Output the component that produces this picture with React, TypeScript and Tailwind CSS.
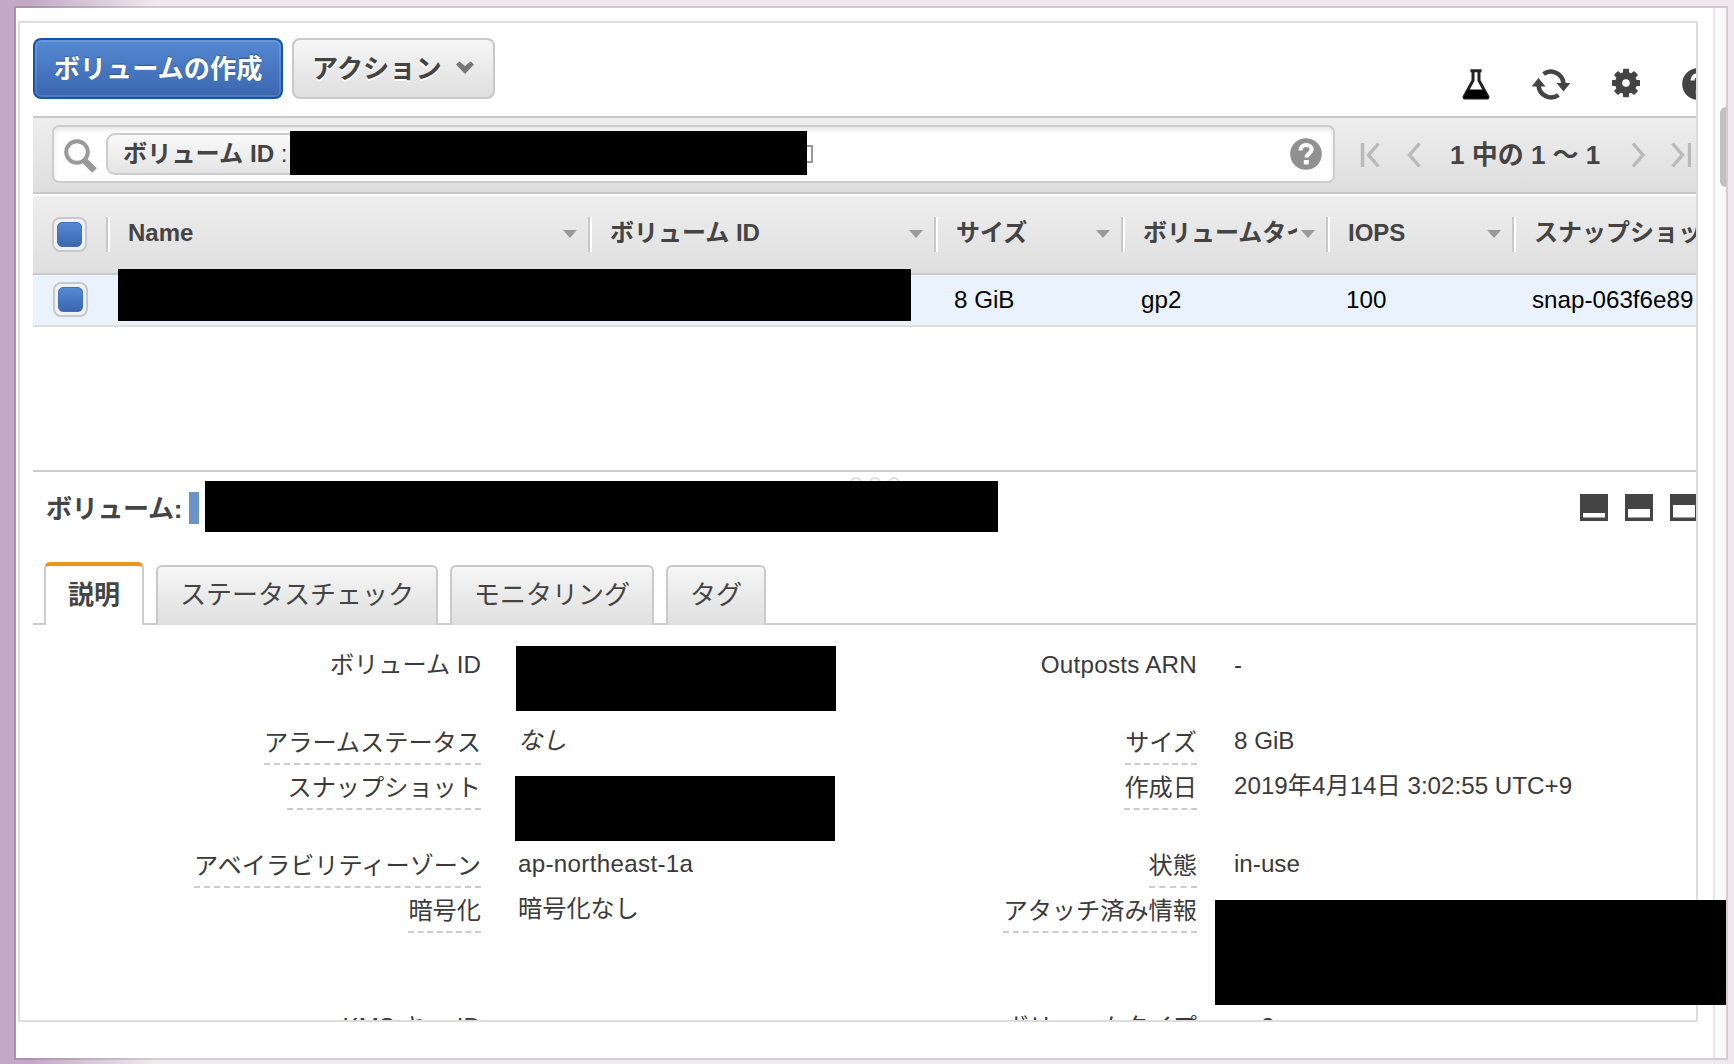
import { useState } from 'react'
import { clsx } from 'clsx'

type Column = { label: string; value: string; width: string }

const COLUMNS: Column[] = [
  { label: 'Name',             value: '',              width: 'w-[482px]' },
  { label: 'ボリューム ID',     value: '',              width: 'w-[346px]' },
  { label: 'サイズ',           value: '8 GiB',         width: 'w-[187px]' },
  { label: 'ボリュームタイプ',  value: 'gp2',           width: 'w-[205px]' },
  { label: 'IOPS',             value: '100',           width: 'w-[186px]' },
  { label: 'スナップショット',  value: 'snap-063f6e89', width: 'w-[230px]' },
]

const TABS = ['説明', 'ステータスチェック', 'モニタリング', 'タグ']

const DETAILS = [
  { height: 'h-[77px]',  left: 'ボリューム ID',          leftValue: '',                right: 'Outposts ARN',     rightValue: '-', plain: true },
  { height: 'h-[45px]',  left: 'アラームステータス',      leftValue: 'なし',            right: 'サイズ',           rightValue: '8 GiB', italic: true },
  { height: 'h-[78px]',  left: 'スナップショット',        leftValue: '',                right: '作成日',           rightValue: '2019年4月14日 3:02:55 UTC+9' },
  { height: 'h-[45px]',  left: 'アベイラビリティーゾーン', leftValue: 'ap-northeast-1a', right: '状態',             rightValue: 'in-use' },
  { height: 'h-[117px]', left: '暗号化',                 leftValue: '暗号化なし',       right: 'アタッチ済み情報',  rightValue: '' },
  { height: 'h-[46px]',  left: 'KMS キー ID',            leftValue: '',                right: 'ボリュームタイプ',  rightValue: 'gp2', plain: true },
]

function FlaskIcon() {
  return (
    <svg width="28" height="31" viewBox="0 0 28 31" className="shrink-0">
      <path d="M8.500 1.700h11M11 2v9.500L2.200 27.500a1 1 0 0 0 .9 1.600h21.800a1 1 0 0 0 .9-1.600L17 11.500V2" fill="none" stroke="#222" strokeWidth="3" />
      <path d="M6 20.500h16l5 9H1z" fill="#000" />
    </svg>
  )
}

function RefreshIcon() {
  return (
    <svg width="38" height="32" viewBox="0 0 38 32" className="shrink-0">
      <path d="M11.500 6A12.600 12.600 0 0 1 31.400 16M26.500 27A12.600 12.600 0 0 1 6.600 17" fill="none" stroke="#444" strokeWidth="4.600" />
      <path d="M24.500 15h14l-7 8.500zM-.5 18.500h14l-7-8.500z" fill="#444" />
    </svg>
  )
}

function GearIcon() {
  return (
    <svg width="28" height="30" viewBox="-14 -15 28 30" className="shrink-0">
      <g fill="#444">
        {[0, 45, 90, 135].map(a => (
          <rect key={a} x="-3" y="-14.200" width="6" height="28.400" rx="1" transform={`rotate(${a})`} />
        ))}
        <circle r="11" />
      </g>
      <circle r="3.800" fill="#fff" />
    </svg>
  )
}

function HelpIcon({ color }: { color: string }) {
  return (
    <svg width="32" height="32" viewBox="0 0 32 32" className="shrink-0">
      <circle cx="16" cy="16" r="15.800" fill={color} />
      <path d="M10.500 12.500c0-3.500 2.500-5.500 5.600-5.500 3.300 0 5.500 1.900 5.500 4.600 0 4-5.100 4.200-5.100 8" fill="none" stroke="#fff" strokeWidth="4.200" />
      <rect x="13.800" y="22" width="5" height="4.400" fill="#fff" />
    </svg>
  )
}

function PagerIcon({ d, className }: { d: string; className?: string }) {
  return (
    <svg width="20" height="26" viewBox="0 0 20 26" className={clsx('shrink-0', className)}>
      <path d={d} fill="none" stroke="#b9b9b9" strokeWidth="3.400" />
    </svg>
  )
}

// Split-view toggles: the higher the window, the larger the lower pane
function PaneIcon({ top }: { top: number }) {
  return (
    <svg width="28" height="27" viewBox="0 0 28 27" className="shrink-0">
      <rect width="28" height="27" fill="#444" />
      <rect x="3" y={top} width="22" height={23.5 - top} fill="#fff" />
    </svg>
  )
}

function Checkbox({ className }: { className: string }) {
  return (
    <div className={clsx('h-[35px] w-[35px] shrink-0 rounded-[8px] border-2 border-[#c8c8c8] bg-[#f1f1f1] p-[3px]', className)}>
      <div className="h-full w-full rounded-[5px] border border-[#3f70ba] bg-linear-to-b from-[#5689d3] to-[#3a66af]" />
    </div>
  )
}

function Label({ text, plain, className }: { text: string; plain?: boolean; className: string }) {
  return (
    <div className={clsx('shrink-0 text-right', className)}>
      <span className={clsx('inline-block h-[41px]', !plain && 'border-b-2 border-dashed border-[#ccc] pt-px')}>{text}</span>
    </div>
  )
}

export default function App() {
  const [activeTab, setActiveTab] = useState(TABS[0])

  return (
    <div className="flex h-[1064px] w-[1734px] overflow-hidden bg-linear-to-r from-[#c3a8c7] from-[30px] via-[#efe9ed] via-[155px] to-[#efe8ec] pt-[6px] pr-[6px] pb-[4px] pl-[14px] font-['Liberation_Sans','Noto_Sans_CJK_JP',sans-serif] text-[24px] text-[#444]">
      <div className="relative flex flex-1 border-2 border-black/12 bg-white bg-clip-padding">
        <div className="mt-[13px] ml-[2px] h-[1001px] w-[1680px] shrink-0 overflow-hidden border-2 border-[#ddd] pl-[13px] whitespace-nowrap">

          {/* Actions */}
          <div className="flex h-[93px] items-start pt-[15px] text-[26px] font-bold">
            <button className="h-[61px] w-[250px] shrink-0 rounded-[8px] border-2 border-[#1456af] bg-linear-to-b from-[#5689d3] to-[#3a66af] pt-[2px] text-[26.200px] text-white shadow-[inset_0_0_0_2px_rgba(255,255,255,0.12)] text-shadow-[0_-1px_1px_rgba(0,0,0,0.3)]">
              ボリュームの作成
            </button>
            <button className="ml-[9px] flex h-[61px] w-[203px] shrink-0 items-center rounded-[8px] border-2 border-[#c8c8c8] bg-linear-to-b from-[#f6f6f6] to-[#dfdfdf] pt-[2px] pl-[18px] text-[26.200px] text-shadow-[0_2px_0_#fff]">
              アクション
              <svg width="20" height="14" viewBox="0 0 20 14" className="mt-[-3px] ml-[13px]">
                <path d="M1 3.500 4.500.5 10 5 15.500.5 19 3.500 10 13z" fill="#777" />
              </svg>
            </button>
            <div className="mt-[30px] ml-[967px] flex shrink-0 items-center gap-[42px]">
              <FlaskIcon />
              <RefreshIcon />
              <div className="mt-[-3px]"><GearIcon /></div>
              <HelpIcon color="#444" />
            </div>
          </div>

          {/* Filter and pager */}
          <div className="flex h-[78px] items-start border-t-2 border-b-2 border-[#c8c8c8] bg-linear-to-b from-[#eee] to-[#dedede] pt-[7px] pl-[19px]">
            <div className="relative flex h-[58px] w-[1283px] shrink-0 items-center rounded-[7px] border-2 border-[#ccc] bg-white shadow-[inset_0_3px_5px_rgba(0,0,0,0.1)]">
              <svg width="34" height="34" viewBox="0 0 34 34" className="mt-[3px] ml-[10px]">
                <circle cx="13" cy="13" r="10.800" fill="none" stroke="#999" strokeWidth="4" />
                <path d="m21 22 9.500 9.500" stroke="#999" strokeWidth="6.500" />
              </svg>
              <div className="ml-[8px] h-[42px] w-[500px] rounded-[9px] border-2 border-[#ccc] bg-linear-to-b from-[#fafafa] to-[#e4e4e4] pl-[15px] text-[24.200px] leading-[38px]">
                <b>ボリューム ID</b> :
              </div>
              <div className="absolute top-[18px] left-[744px] h-[18px] w-[15px] border-2 border-[#999]" />
              <div className="absolute top-[4px] left-[236px] h-[44px] w-[517px] bg-black" />
              <div className="mr-[11px] ml-auto">
                <HelpIcon color="#919191" />
              </div>
            </div>
            <div className="mt-[15px] ml-[25px] flex shrink-0 items-center leading-[30px]">
              <PagerIcon d="M2.500 1v24M18.500 1.500 8.500 13l10 11.500" />
              <PagerIcon d="M14.500 1.500 4.500 13l10 11.500" className="ml-[25px]" />
              <span className="ml-[25px] w-[152px] text-[26px] font-bold">1 中の 1 〜 1</span>
              <PagerIcon d="M2 1.500 12 13 2 24.500" className="ml-[29px]" />
              <PagerIcon d="M1.500 1.500 11.500 13l-10 11.500M18.500 1v24" className="ml-[20px]" />
            </div>
          </div>

          {/* Volumes table */}
          <div className="flex h-[81px] border-t-2 border-t-white border-b-2 border-b-[#c8c8c8] bg-linear-to-b from-[#eee] to-[#dfdfdf] pt-[21px] font-bold">
            <Checkbox className="mr-[19px] ml-[19px]" />
            {COLUMNS.map(c => (
              <div key={c.label} className={clsx('flex h-[35px] shrink-0 items-start border-l-2 border-[#c8c8c8] shadow-[inset_2px_0_0_#fff]', c.width)}>
                <span className="mr-[4px] ml-[20px] h-[35px] flex-1 overflow-hidden leading-[31px]">{c.label}</span>
                <svg width="14" height="8" viewBox="0 0 14 8" className="mt-[13px] mr-[11px]">
                  <path d="M0 0h14L7 8z" fill="#999" />
                </svg>
              </div>
            ))}
          </div>
          <div className="relative flex h-[52px] border-b-2 border-[#ddd] bg-[#eaf2fd] pt-[7px] text-black">
            <Checkbox className="mr-[17px] ml-[20px]" />
            {COLUMNS.map(c => (
              <div key={c.label} className={clsx('shrink-0 pl-[21px] text-[24.200px] leading-[35px]', c.width)}>{c.value}</div>
            ))}
            <div className="absolute top-[-6px] left-[85px] h-[52px] w-[793px] bg-black" />
          </div>

          {/* Selected volume */}
          <div className="relative mt-[143px] flex h-[91px] border-t-2 border-[#ccc] pt-[20px] pl-[13px]">
            <div className="absolute top-[5px] left-[817px] flex gap-[7px]">
              {[0, 1, 2].map(i => (
                <span key={i} className="h-3 w-3 rounded-full border-2 border-[#ddd]" />
              ))}
            </div>
            <span className="w-[143px] shrink-0 text-[26px] leading-[35px] font-bold tracking-[-0.300px]">ボリューム:</span>
            <div className="h-[32px] w-[10px] shrink-0 bg-[#6c93c7]" />
            <div className="absolute top-[9px] left-[172px] h-[51px] w-[793px] bg-black" />
            <div className="mt-[2px] ml-[1381px] flex shrink-0 gap-[17px]">
              <PaneIcon top={19} />
              <PaneIcon top={15} />
              <PaneIcon top={11} />
            </div>
          </div>

          {/* Tabs */}
          <div className="flex h-[64px] items-end text-[26px]">
            <div className="h-[2px] w-[11px] bg-[#ccc]" />
            {TABS.map(tab => (
              <div key={tab} className="flex shrink-0 items-end">
                {tab === activeTab ? (
                  <button className="h-[63px] rounded-t-[6px] border-x-2 border-t-[4px] border-x-[#ccc] border-t-[#e9951c] bg-white px-[22px] font-bold">{tab}</button>
                ) : (
                  <button onClick={() => setActiveTab(tab)} className="h-[60px] rounded-t-[6px] border-2 border-b-0 border-[#c8c8c8] bg-linear-to-b from-[#f6f6f6] to-[#dfdfdf] px-[22px] pb-[1px]">{tab}</button>
                )}
                <div className="h-[2px] w-[12px] bg-[#ccc]" />
              </div>
            ))}
            <div className="h-[2px] flex-1 bg-[#ccc]" />
          </div>

          {/* Description */}
          <div className="relative pt-[22px] text-[24.200px] leading-[36px] text-[#3a3a3a]">
            {DETAILS.map(d => (
              <div key={d.left} className={clsx('flex', d.height)}>
                <Label text={d.left} plain={d.plain} className="w-[448px]" />
                <div className={clsx('mt-[-1px] ml-[37px] w-[460px] shrink-0', d.italic && 'italic', d.leftValue.startsWith('ap-') && 'tracking-[0.300px]')}>{d.leftValue}</div>
                <Label text={d.right} plain={d.plain} className={clsx('w-[219px]', d.right === 'Outposts ARN' && 'tracking-[0.250px]')} />
                <div className={clsx('ml-[37px] shrink-0', !d.plain && 'mt-[-1px]')}>{d.rightValue}</div>
              </div>
            ))}
            <div className="absolute top-[21px] left-[483px] h-[65px] w-[320px] bg-black" />
            <div className="absolute top-[151px] left-[482px] h-[65px] w-[320px] bg-black" />
          </div>
        </div>

        {/* Scrollbar */}
        <div className="ml-[15px] flex w-[13px] shrink-0 justify-end border-l-2 border-[#e5e5e5] bg-[#fafafa] pt-[99px]">
          <div className="h-[80px] w-[6px] rounded-l-[6px] bg-[#c1c1c1]" />
        </div>
        <div className="absolute top-[892px] left-[1199px] h-[105px] w-[511px] bg-black" />
      </div>
    </div>
  )
}
